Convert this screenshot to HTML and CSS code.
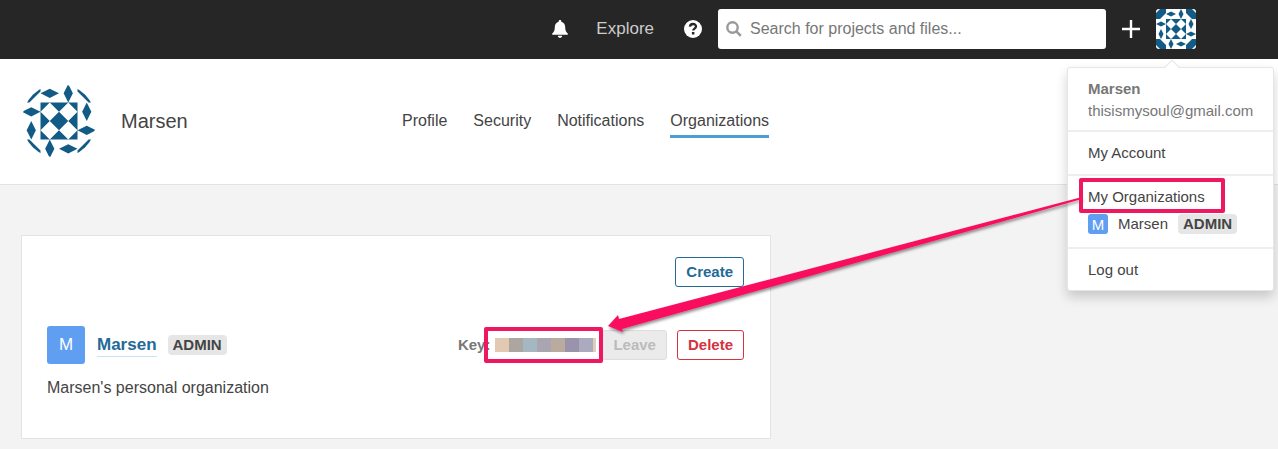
FILE: index.html
```html
<!DOCTYPE html>
<html lang="en">
<head>
<meta charset="utf-8">
<meta name="viewport" content="width=device-width, initial-scale=1">
<title>Organizations - My Account</title>
<link rel="stylesheet" href="styles.css">
</head>
<body>
<svg class="defs" aria-hidden="true">
  <defs>
    <symbol id="identicon" viewBox="0 0 80 80">
      <rect width="80" height="80" fill="#fff"/>
      <g fill="#125b87">
        <path d="M20 20h40v40H20z"/>
        <path d="M20 10 30 5 40 10 30 15zM50 0 55 10 50 20 45 10zM0 30 10 25 20 30 10 35zM10 40 15 50 10 60 5 50zM70 20 75 30 70 40 65 30zM60 50 70 45 80 50 70 55zM30 60 35 70 30 80 25 70zM40 70 50 65 60 70 50 75z"/>
        <path d="M0 8 8 0H20V8L8 20H0zM60 0H72L80 8V20H72L60 8zM0 60H8L20 72V80H8L0 72zM60 72 72 60H80V72L72 80H60z"/>
      </g>
      <path fill="#fff" d="M30 20 40 30 30 40 20 30zM50 20 60 30 50 40 40 30zM30 40 40 50 30 60 20 50zM50 40 60 50 50 60 40 50z"/>
    </symbol>
  </defs>
</svg>

<nav class="topbar" aria-label="Global">
  <button class="icon-button bell" type="button" aria-label="Notifications">
    <svg width="16" height="18" viewBox="0 0 16 18"><path fill="#fff" d="M8 0c.8 0 1.300.5 1.300 1.300v.5c2.500.6 3.900 2.700 3.900 5.300 0 3.400.8 4.900 2.500 6.300.5.400.3 1.300-.5 1.300H.8c-.8 0-1-.9-.5-1.300C2 12 2.800 10.500 2.800 7.100c0-2.600 1.400-4.700 3.900-5.300v-.5C6.700.5 7.200 0 8 0zM5.900 15.700h4.200C10.100 17 9.200 17.800 8 17.800S5.900 17 5.900 15.700z"/></svg>
  </button>
  <a class="explore" href="#explore">Explore</a>
  <button class="icon-button help" type="button" aria-label="Help">
    <svg width="18" height="18" viewBox="0 0 18 18"><circle cx="9" cy="9" r="9" fill="#fff"/><path d="M5.900 6.700C6.200 3.200 12 3.100 12 6.400c0 2.200-2.800 2.100-2.800 4.200" fill="none" stroke="#262626" stroke-width="2.300"/><path fill="#262626" d="M7.900 12h2.500v2.500H7.900z"/></svg>
  </button>
  <label class="search">
    <svg width="16" height="16" viewBox="0 0 16 16"><circle cx="6.500" cy="6.500" r="5.200" fill="none" stroke="#999" stroke-width="2.400"/><path d="m10.400 10.400 4.400 4.400" stroke="#999" stroke-width="2.600"/></svg>
    <input type="search" placeholder="Search for projects and files..." aria-label="Search for projects and files">
  </label>
  <button class="icon-button plus" type="button" aria-label="Create new">
    <svg width="18" height="18" viewBox="0 0 18 18"><path d="M9 0v18M0 9h18" stroke="#fff" stroke-width="2.400"/></svg>
  </button>
  <div class="account">
    <button class="icon-button avatar" type="button" aria-label="Account menu"><svg width="40" height="40"><use href="#identicon"/></svg></button>
    <div class="menu">
      <div class="menu-section user">
        <strong>Marsen</strong>
        <span>thisismysoul@gmail.com</span>
      </div>
      <div class="menu-section"><a href="#account">My Account</a></div>
      <div class="menu-section orgs">
        <a href="#organizations">My Organizations</a>
        <a class="menu-org" href="#marsen"><span class="initial small">M</span><span>Marsen</span><span class="badge">ADMIN</span></a>
      </div>
      <div class="menu-section"><a href="#logout">Log out</a></div>
    </div>
  </div>
</nav>

<header class="profile">
  <div class="person">
    <svg class="portrait" width="74" height="74"><use href="#identicon"/></svg>
    <h1>Marsen</h1>
  </div>
  <nav class="tabs" aria-label="Account">
    <a href="#profile">Profile</a>
    <a href="#security">Security</a>
    <a href="#notifications">Notifications</a>
    <a class="active" href="#organizations" aria-current="page">Organizations</a>
  </nav>
</header>

<main>
  <section class="panel">
    <div class="panel-actions"><button class="button" type="button">Create</button></div>
    <div class="org">
      <span class="initial">M</span>
      <a class="org-name" href="#marsen">Marsen</a>
      <span class="badge">ADMIN</span>
      <div class="org-actions">
        <span class="key">Key:</span>
        <span class="mosaic"><i></i><i></i><i></i><i></i><i></i><i></i><i></i><i></i></span>
        <button class="button leave" type="button" disabled>Leave</button>
        <button class="button delete" type="button">Delete</button>
      </div>
    </div>
    <p>Marsen's personal organization</p>
  </section>
</main>

<svg class="annotation" width="1278" height="449" viewBox="0 0 1278 449" aria-hidden="true">
  <defs><filter id="shadow" x="-5%" y="-10%" width="110%" height="125%"><feDropShadow dx="1" dy="2" stdDeviation="1.500" flood-color="#000" flood-opacity=".45"/></filter></defs>
  <path filter="url(#shadow)" fill="#f9115e" d="M1082 197 1082 199 622 329 623 332 608 326 618 315 619 319z"/>
  <g fill="none" stroke="#ee1760" stroke-width="4" stroke-linejoin="round"><path d="M1081 180h142v31h-142z"/><path d="M486 329h115v32H486z"/></g>
</svg>
</body>
</html>
```
FILE: styles.css
```css
* { box-sizing: border-box; }

body {
  margin: 0;
  position: relative;
  min-height: 100vh;
  background: #f3f3f3;
  color: #444;
  font: 15px/22px "Liberation Sans", Arial, sans-serif;
}

a { color: inherit; text-decoration: none; }
button, input { font: inherit; }
svg { display: block; }
.defs { position: absolute; width: 0; height: 0; }

.topbar {
  display: flex;
  align-items: center;
  justify-content: flex-end;
  padding: 9px 82px 10px 0;
  background: #262626;
}

.icon-button { padding: 0; border: 0; background: none; cursor: pointer; }
.explore { margin: 0 30px 0 28px; color: #ccc; font-size: 17px; }

.search {
  display: flex;
  align-items: center;
  gap: 8px;
  width: 388px;
  height: 40px;
  margin: 0 16px;
  padding: 0 8px;
  border-radius: 3px;
  background: #fff;
}

.search input {
  flex: 1;
  min-width: 0;
  padding: 0;
  border: 0;
  outline: 0;
  background: none;
  font-size: 16px;
}
.search input::placeholder { color: #777; opacity: 1; }

.account { position: relative; margin-left: 16px; }
.avatar { display: block; overflow: hidden; border-radius: 3px; }

.menu {
  position: absolute;
  z-index: 1;
  top: 58px;
  right: -78px;
  width: 207px;
  border: 1px solid #e6e6e6;
  border-radius: 3px;
  background: #fff;
  box-shadow: 0 6px 12px rgba(0, 0, 0, .18);
}

.menu::before {
  content: "";
  position: absolute;
  top: -6px;
  left: 98px;
  width: 11px;
  height: 11px;
  border: solid #e6e6e6;
  border-width: 1px 0 0 1px;
  background: #fff;
  transform: rotate(45deg);
}

.menu-section { padding: 10px 20px; }
.menu-section + .menu-section { border-top: 2px solid #eee; }
.menu-section > a { display: block; }
.user { display: flex; flex-direction: column; padding-bottom: 8px; color: #777; }
.menu-section.orgs { padding-bottom: 12px; }
.menu-section .menu-org { display: flex; align-items: center; gap: 10px; margin-top: 5px; }
.menu-section:last-child { padding-bottom: 9px; }

.initial {
  display: grid;
  place-items: center;
  width: 38px;
  height: 38px;
  border-radius: 3px;
  background: #5f9ef0;
  color: #fff;
  font-size: 17px;
}
.initial.small { width: 20px; height: 20px; font-size: 15px; }

.badge {
  padding: 0 5px;
  border-radius: 4px;
  background: #e6e6e6;
  font-weight: bold;
  line-height: 20px;
}

.profile {
  display: grid;
  grid-template-columns: 380px 1fr;
  align-items: center;
  padding: 25px 22px 26px;
  border-bottom: 1px solid #e3e3e3;
  background: #fff;
}
.person { display: flex; align-items: center; gap: 25px; }
.portrait { border-radius: 50%; }
h1 { margin: 0; font-size: 20px; font-weight: normal; }

.tabs { display: flex; gap: 26px; padding-top: 2px; font-size: 16px; }
.tabs a { padding: 3px 0; border-bottom: 3px solid transparent; }
.tabs .active { border-color: #4b9fd5; }

main { padding: 50px 21px 10px; }
.panel {
  max-width: 750px;
  padding: 21px 26px 39px 25px;
  border: 1px solid #e3e3e3;
  background: #fff;
}
.panel-actions { display: flex; justify-content: flex-end; margin-bottom: 39px; }

.button {
  height: 30px;
  padding: 0 10px;
  border: 1px solid #236a97;
  border-radius: 3px;
  background: #fff;
  color: #236a97;
  font-weight: bold;
}
.button.leave { border-color: #ddd; background: #ebebeb; color: #bbb; }
.button.delete { margin-left: 10px; border-color: #d4333f; color: #d4333f; }

.org { display: flex; align-items: center; }
.org-name {
  margin: 0 11px 0 12px;
  border-bottom: 1px solid #cae3f2;
  color: #236a97;
  font-size: 17px;
  font-weight: bold;
}
.org-actions { display: flex; align-items: center; margin-left: auto; }
.key { color: #777; font-weight: bold; }

.mosaic { display: flex; width: 101px; height: 14px; margin: 0 6px 0 5px; }
.mosaic i { flex: 0 0 14px; background: #e2c9b1; }
.mosaic i:nth-child(2) { background: #aca6a1; }
.mosaic i:nth-child(3) { background: #a5b8c2; }
.mosaic i:nth-child(4) { background: #a9a6b2; }
.mosaic i:nth-child(5) { background: #baab9f; }
.mosaic i:nth-child(6) { background: #9993ac; }
.mosaic i:nth-child(7) { background: #abaabe; }
.mosaic i:nth-child(8) { flex-basis: 3px; background: #e2cdb9; }

.panel p { margin: 13px 0 0; font-size: 16px; }

.annotation { position: absolute; z-index: 2; top: 0; left: 0; pointer-events: none; }
```
